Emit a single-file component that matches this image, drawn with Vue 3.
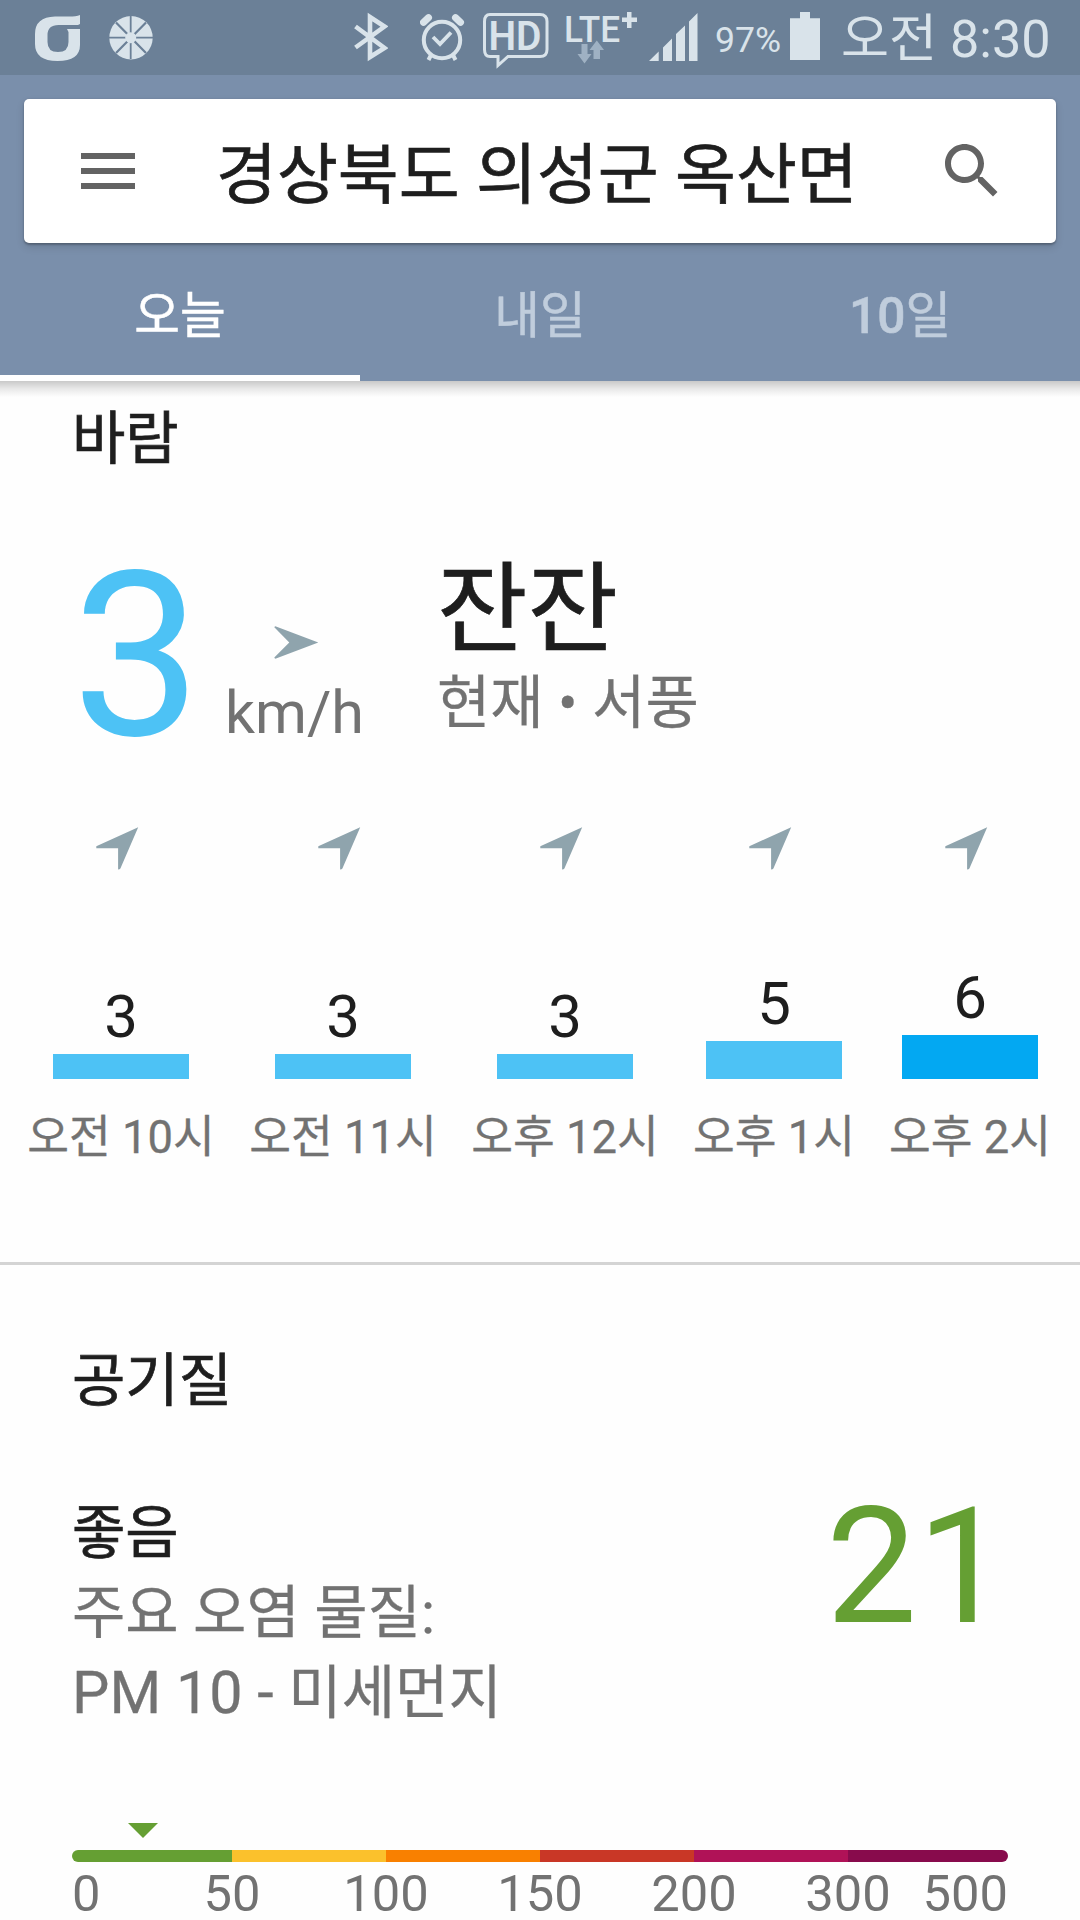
<script setup>
const tabs = [
  { num: '', label: '오늘', active: true },
  { num: '', label: '내일', active: false },
  { num: '10', label: '일', active: false },
]

const hours = [
  { speed: 3, height: 25, label: '오전 10시', wide: true },
  { speed: 3, height: 25, label: '오전 11시', wide: true },
  { speed: 3, height: 25, label: '오후 12시', wide: true },
  { speed: 5, height: 38, label: '오후 1시', wide: false },
  { speed: 6, height: 44, label: '오후 2시', wide: false, peak: true },
]

const levels = ['good', 'moderate', 'sensitive', 'unhealthy', 'severe', 'hazardous']
const ticks = [0, 50, 100, 150, 200, 300, 500]
</script>

<template>
  <div class="page">
    <div class="status">
      <svg class="carrier" width="46" height="75" viewBox="35 0 46 75">
        <path fill-rule="evenodd" d="M80 15v9l-2 1H58.500q-11 0-11 10v7q0 10 10.500 10t10.500-10V32l-1.500-3H80v16q0 16-22.500 16T35 44V34q0-17 20-17.500h14Q76 16.500 80 15z" />
      </svg>
      <svg class="wheel" width="44" height="75" viewBox="109 0 44 75">
        <circle cx="131" cy="37.700" r="21.700" />
        <g class="cut">
          <path d="M130.700 16v43M109 37.700h44" stroke-width="1.800" />
          <path d="M116 22.500l30 30.500M146 22.500L116 53" stroke-width="2.200" />
        </g>
        <circle cx="130.700" cy="37.700" r="5.500" />
      </svg>
      <svg class="bluetooth" width="34" height="75" viewBox="354 0 34 75">
        <path class="line" stroke-width="4.600" d="M355.500 26.500l29 21.500-14.500 9V17l14.500 9.500-29 21" />
      </svg>
      <svg class="alarm" width="45" height="75" viewBox="420 0 45 75">
        <circle class="line" cx="442" cy="40" r="18.200" stroke-width="4" />
        <path class="line" stroke-width="3.800" d="M433 37l7 7 11-11.500" />
        <path class="line" stroke-width="4" d="M431 55l-2.500 5M453 55l2.500 5" />
        <path class="line" stroke-width="7" stroke-linecap="round" d="M423.500 22.300l5-4.600M460.500 22.300l-5-4.600" />
      </svg>
      <svg class="hd" width="66" height="75" viewBox="483 0 66 75">
        <path class="line" stroke-width="3" d="M490 14.500h50q7 0 7 7v28q0 7-7 7h-32l-10 9v-9h-8q-5.500 0-5.500-7v-28q0-7 5.500-7z" />
        <text x="488.500" y="50" font-size="41" font-weight="600" textLength="53" lengthAdjust="spacingAndGlyphs">HD</text>
      </svg>
      <svg class="lte" width="74" height="75" viewBox="565 0 74 75">
        <text x="564" y="42" font-size="36" font-weight="500" textLength="56" lengthAdjust="spacingAndGlyphs">LTE</text>
        <path d="M627 12h4.500v5.500h5.500v4.500h-5.500v6H627v-6h-5v-4.500h5z" />
        <path class="dim" d="M581.500 44h6v10h4l-7 9.500-7-9.500h4zM593.500 59h6.500V50h4l-7.200-9.500-7.300 9.500h4z" />
      </svg>
      <svg class="signal" width="49" height="75" viewBox="649 0 49 75">
        <path d="M649 61l9.700-9.500V61zM663 61V47.500l9-9V61zM676 61V34l9-8.500V61zM689 61V21.500l8.500-8.500v48z" />
      </svg>
      <span class="percent">97%</span>
      <svg class="battery" width="30" height="75" viewBox="790 0 30 75">
        <path d="M800 12h10v6.300h10V60h-30V18.300h10z" />
      </svg>
      <span class="clock">오전 8:30</span>
    </div>

    <header class="header">
      <div class="search">
        <svg class="menu-icon" width="72" height="72" viewBox="0 0 24 24">
          <path d="M3 18h18v-2H3v2zm0-5h18v-2H3v2zm0-7v2h18V6H3z" />
        </svg>
        <span class="place">경상북도 의성군 옥산면</span>
        <svg class="search-icon" width="72" height="72" viewBox="0 0 24 24">
          <path d="M15.500 14h-.79l-.28-.27C15.410 12.590 16 11.110 16 9.500 16 5.910 13.090 3 9.500 3S3 5.910 3 9.500 5.910 16 9.500 16c1.610 0 3.090-.59 4.230-1.570l.27.28v.79l5 4.990L20.490 19l-4.990-5zm-6 0C7.010 14 5 11.990 5 9.500S7.010 5 9.500 5 14 7.010 14 9.500 11.990 14 9.500 14z" />
        </svg>
      </div>
      <nav class="tabs">
        <div v-for="tab in tabs" :key="tab.label" class="tab" :class="{ active: tab.active }">
          <b v-if="tab.num">{{ tab.num }}</b>{{ tab.label }}
        </div>
      </nav>
    </header>

    <section class="wind">
      <h2>바람</h2>
      <div class="current">
        <span class="speed">3</span>
        <div class="unit">
          <svg width="45" height="33" viewBox="0 0 45 33">
            <path d="M.3 1.200Q.8.200 2 .4L44.300 16.500 2 32.600Q.6 33 .3 31.600L15.300 16.500z" />
          </svg>
          <span>km/h</span>
        </div>
        <div class="summary">
          <strong>잔잔</strong>
          <span>현재 • 서풍</span>
        </div>
      </div>
      <div class="hours">
        <div v-for="hour in hours" :key="hour.label" class="hour" :class="{ wide: hour.wide }">
          <svg class="pointer" width="43" height="43" viewBox="0 0 43 43">
            <path d="M42.200.3L24.400 41.500q-.6 1-2.300 1V21.300H.3V19.200z" />
          </svg>
          <div class="chart">
            <span class="value">{{ hour.speed }}</span>
            <div class="bar" :class="{ peak: hour.peak }" :style="{ height: hour.height + 'px' }"></div>
          </div>
          <span class="time">{{ hour.label }}</span>
        </div>
      </div>
    </section>

    <section class="air">
      <h2>공기질</h2>
      <div class="quality">
        <div class="details">
          <strong>좋음</strong>
          <span>주요 오염 물질:</span>
          <span><span class="latin">PM 10 - </span>미세먼지</span>
        </div>
        <span class="index">21</span>
      </div>
      <svg class="marker" width="30" height="15" viewBox="0 0 30 15">
        <path d="M0 0h30L15 15z" />
      </svg>
      <div class="scale">
        <i v-for="level in levels" :key="level" :class="level"></i>
      </div>
      <div class="ticks">
        <span v-for="tick in ticks" :key="tick">{{ tick }}</span>
      </div>
    </section>
  </div>
</template>

<style>
body {
  margin: 0;
  background: #fefefe;
}
</style>

<style scoped>
.page {
  width: 1080px;
  height: 1920px;
  overflow: hidden;
  background: #fefefe;
  color: #1e1e1e;
  font-family: Roboto, "Noto Sans CJK KR", sans-serif;
}
svg {
  display: block;
  flex: none;
}
span,
strong {
  white-space: nowrap;
}
strong,
h2 {
  margin: 0;
  font-weight: 400;
}
strong,
h2,
.place {
  -webkit-text-stroke: .7px currentColor;
}

.status {
  display: flex;
  height: 75px;
  background: #6b8097;
  color: #d9e3ea;
  fill: #d9e3ea;
}
.status .line {
  fill: none;
  stroke: #d9e3ea;
}
.status .cut {
  fill: none;
  stroke: #6b8097;
}
.status .dim {
  fill: #9fb1c3;
}
.carrier { margin-left: 35px; }
.wheel { margin-left: 28px; }
.bluetooth { margin-left: 201px; }
.alarm { margin-left: 32px; }
.hd { margin-left: 18px; }
.lte { margin-left: 16px; }
.signal { margin-left: 10px; }
.percent {
  width: 75px;
  margin-left: 17px;
  padding-top: 19px;
  font-size: 35.600px;
  line-height: 42px;
}
.clock {
  margin-left: 21px;
  padding-top: 9px;
  font-size: 52.200px;
  line-height: 61px;
}

.header {
  position: relative;
  height: 306px;
  box-sizing: border-box;
  padding-top: 24px;
  background: #7a8fab;
}
.header::after {
  content: "";
  position: absolute;
  top: 100%;
  left: 0;
  right: 0;
  height: 16px;
  background: linear-gradient(#c9c9c9, #e9e9e9 50%, #fefefe);
}
.search {
  display: flex;
  height: 144px;
  margin: 0 24px;
  box-sizing: border-box;
  padding: 36px 48px 0;
  background: #fff;
  border-radius: 5px;
  box-shadow: 0 2px 2px rgba(0, 0, 0, .22), 0 4px 8px rgba(0, 0, 0, .12), 0 0 2px rgba(0, 0, 0, .1);
  fill: #636363;
}
.place {
  width: 720px;
  margin-left: 72px;
  padding-top: 3px;
  font-size: 66.200px;
  line-height: 75px;
}
.tabs {
  display: flex;
  height: 138px;
}
.tab {
  flex: 1;
  display: flex;
  justify-content: center;
  box-sizing: border-box;
  padding-top: 45px;
  border-bottom: 6px solid transparent;
  color: #c0cddc;
  font-size: 49.700px;
  line-height: 57px;
  -webkit-text-stroke: .5px currentColor;
}
.tab b {
  font-weight: 500;
}
.tab.active {
  border-color: #fff;
  color: #fff;
}

.wind {
  height: 884px;
  box-sizing: border-box;
  padding-top: 24px;
  border-bottom: 3px solid #d4d4d4;
}
h2 {
  margin-left: 72px;
  font-size: 58px;
  line-height: 68px;
}
.current {
  display: flex;
  height: 269px;
  margin: 49px 0 0 72px;
}
.speed {
  width: 129px;
  color: #4dc2f5;
  font-size: 230px;
  line-height: 269px;
}
.unit {
  width: 140px;
  margin-left: 24px;
  padding-top: 104px;
  color: #727272;
  font-size: 59.200px;
  line-height: 68px;
}
.unit svg {
  margin: 0 0 20px 49px;
}
.unit svg,
.pointer {
  fill: #8fa4ad;
}
.summary {
  display: flex;
  flex-direction: column;
  margin-left: 72px;
  padding-top: 31px;
}
.summary strong {
  font-size: 98.500px;
  line-height: 116px;
}
.summary span {
  color: #727272;
  font-size: 58px;
  line-height: 68px;
}

.hours {
  display: flex;
  margin: 36px 0 0 10px;
}
.hour {
  display: flex;
  flex-direction: column;
  align-items: center;
  width: 196px;
}
.hour.wide {
  width: 222px;
}
.pointer {
  margin-right: 8px;
}
.chart {
  display: flex;
  flex-direction: column;
  justify-content: flex-end;
  align-items: center;
  height: 209px;
}
.value {
  margin-bottom: 2px;
  font-size: 60px;
  line-height: 71px;
}
.bar {
  width: 136px;
  background: #4dc2f5;
}
.bar.peak {
  background: #03a8f2;
}
.time {
  margin-top: 32px;
  color: #727272;
  font-size: 45.400px;
  line-height: 54px;
}
.summary span,
.time,
.details span {
  -webkit-text-stroke: .3px currentColor;
}

.air {
  padding: 82px 72px 0;
}
.air h2 {
  margin-left: 0;
}
.quality {
  display: flex;
  justify-content: space-between;
  height: 261px;
  margin-top: 57px;
}
.details {
  display: flex;
  flex-direction: column;
  padding-top: 21px;
  color: #727272;
  font-size: 58px;
  line-height: 80px;
}
.details strong {
  color: #1e1e1e;
}
.details .latin {
  font-size: 59.300px;
  line-height: 1;
}
.index {
  color: #659f33;
  font-size: 162px;
  line-height: 190px;
}
.marker {
  margin: 90px 0 12px 56px;
  fill: #659f33;
}
.scale {
  display: flex;
  height: 12px;
  overflow: hidden;
  border-radius: 6px;
}
.scale i {
  width: 154px;
}
.scale .good {
  width: 160px;
  background: #659f33;
}
.scale .moderate { background: #fbc12c; }
.scale .sensitive { background: #f98000; }
.scale .unhealthy { background: #c93726; }
.scale .severe { background: #b01257; }
.scale .hazardous {
  width: 160px;
  background: #880b4c;
}
.ticks {
  display: flex;
  margin-top: 6px;
  color: #727272;
  font-size: 50.700px;
  line-height: 52px;
}
.ticks span {
  display: flex;
  justify-content: center;
  width: 154px;
}
.ticks span:first-child {
  justify-content: flex-start;
  width: 83px;
}
.ticks span:last-child {
  justify-content: flex-end;
  width: 83px;
}
</style>
